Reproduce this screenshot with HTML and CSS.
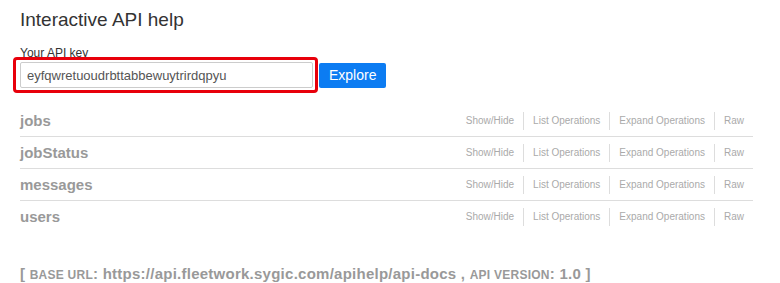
FILE: index.html
```html
<!DOCTYPE html>
<html lang="en">
<head>
  <meta charset="UTF-8">
  <title>Interactive API help</title>
  <link rel="stylesheet" href="styles.css">
</head>
<body>

  <h1>Interactive API help</h1>

  <div class="key-form">
    <label for="apiKey">Your API key</label>
    <div class="key-row">
      <div class="highlight">
        <input type="text" id="apiKey" value="eyfqwretuoudrbttabbewuytrirdqpyu">
      </div>
      <button>Explore</button>
    </div>
  </div>

  <ul class="resources">
    <li class="resource">
      <h2>jobs</h2>
      <ul class="options">
        <li>Show/Hide</li>
        <li>List Operations</li>
        <li>Expand Operations</li>
        <li>Raw</li>
      </ul>
    </li>
    <li class="resource">
      <h2>jobStatus</h2>
      <ul class="options">
        <li>Show/Hide</li>
        <li>List Operations</li>
        <li>Expand Operations</li>
        <li>Raw</li>
      </ul>
    </li>
    <li class="resource">
      <h2>messages</h2>
      <ul class="options">
        <li>Show/Hide</li>
        <li>List Operations</li>
        <li>Expand Operations</li>
        <li>Raw</li>
      </ul>
    </li>
    <li class="resource">
      <h2>users</h2>
      <ul class="options">
        <li>Show/Hide</li>
        <li>List Operations</li>
        <li>Expand Operations</li>
        <li>Raw</li>
      </ul>
    </li>
  </ul>

  <div class="footer">
    [ <span class="caps">base url</span>: https://api.fleetwork.sygic.com/apihelp/api-docs , <span class="caps">api version</span>: 1.0 ]
  </div>

</body>
</html>
```

FILE: styles.css
```css
body {
  margin: 0;
  padding: 0 27px 0 20px;
  font-family: "Liberation Sans", Arial, sans-serif;
  color: #333;
  background-color: #fff;
}
h1 {
  margin: 0;
  padding-top: 8px;
  font-size: 19px;
  font-weight: normal;
  line-height: 24px;
  color: #333;
}
.key-form {
  margin-top: 14px;
}
.key-form label {
  display: block;
  font-size: 12px;
  line-height: 14px;
  color: #333;
}
.key-row {
  display: flex;
  align-items: center;
  margin-top: -3px;
}
.highlight {
  margin-left: -7px;
  padding: 2px 2px 2px 4px;
  border: 3px solid #e8000b;
  border-radius: 4px;
}
.highlight input {
  display: block;
  width: 293px;
  height: 26px;
  box-sizing: border-box;
  padding: 0 6px;
  border: 1px solid #ccc;
  border-radius: 2px;
  font-family: "Liberation Sans", Arial, sans-serif;
  font-size: 13px;
  color: #555;
}
button {
  margin-left: 1px;
  height: 25px;
  padding: 0 10px;
  background-color: #0c7cf2;
  color: #fff;
  border: none;
  border-radius: 2px;
  font-family: "Liberation Sans", Arial, sans-serif;
  font-size: 14px;
}
.resources {
  list-style: none;
  margin: 12px 0 0;
  padding: 0;
}
.resource {
  display: flex;
  justify-content: space-between;
  align-items: center;
  height: 31px;
  border-bottom: 1px solid #ddd;
}
.resource:last-child {
  border-bottom: none;
}
.resource h2 {
  margin: 0;
  font-size: 15px;
  font-weight: bold;
  color: #999;
}
.options {
  list-style: none;
  display: flex;
  margin: 0;
  padding: 0;
}
.options li {
  padding: 2px 9px;
  font-size: 10px;
  line-height: 14px;
  color: #aaa;
  border-right: 1px solid #ddd;
}
.options li:last-child {
  border-right: none;
}
.footer {
  margin-top: 33px;
  font-size: 15px;
  font-weight: bold;
  letter-spacing: 0.25px;
  color: #999;
}
.caps {
  font-size: 12px;
  text-transform: uppercase;
}
```
